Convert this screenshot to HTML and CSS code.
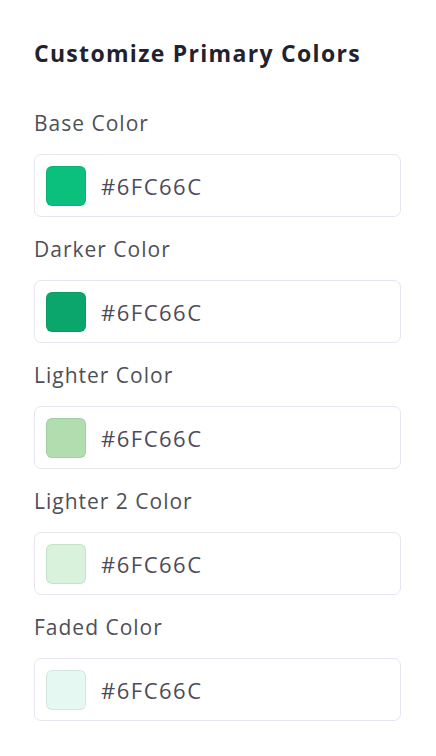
FILE: index.html
```html
<!DOCTYPE html>
<html>
<head>
<meta charset="utf-8">
<link rel="stylesheet" href="styles.css">
</head>
<body>
<section class="panel">
  <h2 class="title">Customize Primary Colors</h2>
  <div class="field">
    <label class="label">Base Color</label>
    <div class="input"><span class="swatch base"></span><span class="value">#6FC66C</span></div>
  </div>
  <div class="field">
    <label class="label">Darker Color</label>
    <div class="input"><span class="swatch darker"></span><span class="value">#6FC66C</span></div>
  </div>
  <div class="field">
    <label class="label">Lighter Color</label>
    <div class="input"><span class="swatch lighter"></span><span class="value">#6FC66C</span></div>
  </div>
  <div class="field">
    <label class="label">Lighter 2 Color</label>
    <div class="input"><span class="swatch lighter2"></span><span class="value">#6FC66C</span></div>
  </div>
  <div class="field">
    <label class="label">Faded Color</label>
    <div class="input"><span class="swatch faded"></span><span class="value">#6FC66C</span></div>
  </div>
</section>
</body>
</html>
```
FILE: styles.css
```css
* { box-sizing: border-box; }
html, body { margin: 0; background: #fff; }
body { font-family: "Open Sans", "Lato", sans-serif; }
.panel { padding: 38px 35px 0 34px; display: flex; flex-direction: column; }
.title { margin: 0 0 42px; font-size: 23px; line-height: 30px; font-weight: 700; letter-spacing: 1.3px; color: #22222e; }
.field { display: flex; flex-direction: column; gap: 18px; margin-bottom: 19px; }
.label { font-size: 21px; line-height: 26px; letter-spacing: 1px; color: #4f4f57; }
.input { height: 63px; border: 1px solid #e6e5f0; border-radius: 7px; display: flex; align-items: center; padding: 0 11px; gap: 15px; }
.swatch { width: 40px; height: 40px; border-radius: 6px; border: 1px solid rgba(0,40,20,0.08); flex: none; }
.value { font-size: 22px; letter-spacing: 1.5px; color: #4b4b5c; }
.base { background: #0bbf7c; }
.darker { background: #0aa66c; }
.lighter { background: #b1ddaf; }
.lighter2 { background: #d8f2db; }
.faded { background: #e6f8f2; }
```
